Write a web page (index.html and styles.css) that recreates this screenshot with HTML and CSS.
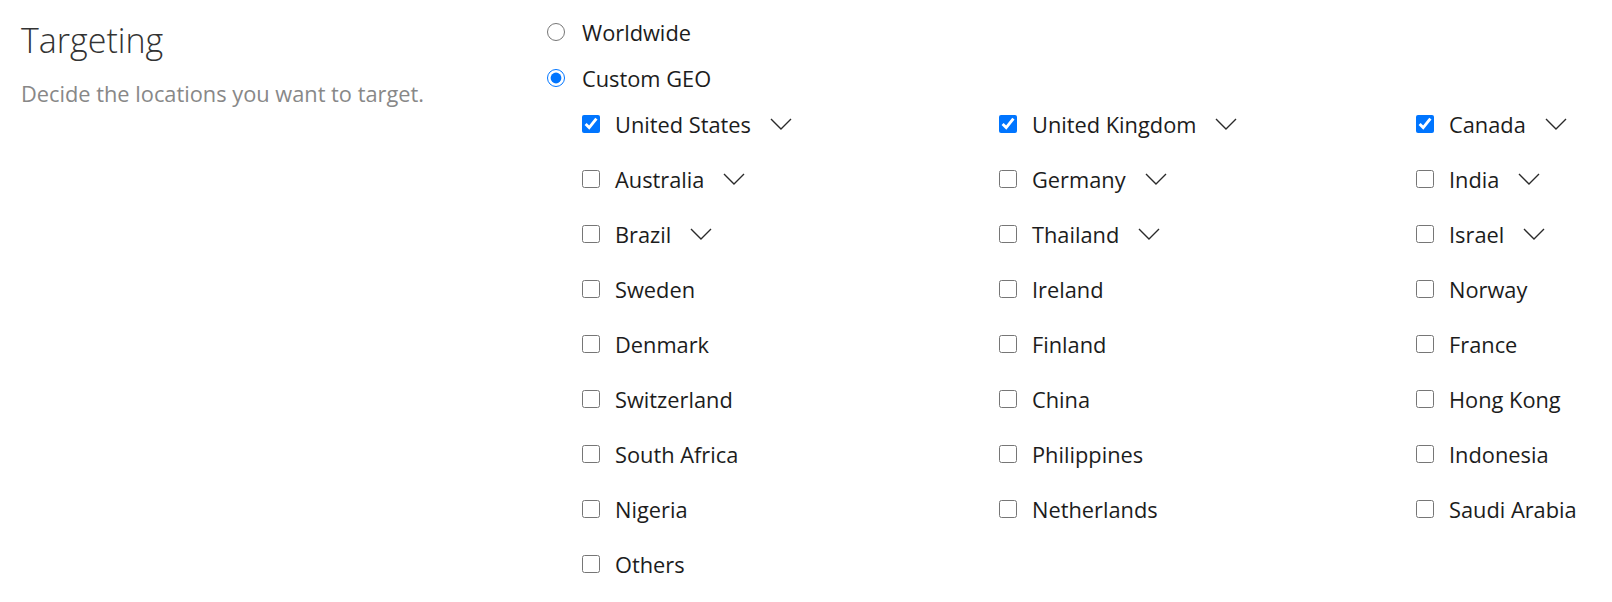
FILE: index.html
```html
<!DOCTYPE html>
<html lang="en">
<head>
<meta charset="utf-8">
<title>Targeting</title>
<link rel="stylesheet" href="styles.css">
</head>
<body>
<div class="page">
  <div class="intro">
    <h2 class="title">Targeting</h2>
    <p class="subtitle">Decide the locations you want to target.</p>
  </div>
  <div class="options">
    <label class="radio-row"><input type="radio" name="geo" class="radio"><span>Worldwide</span></label>
    <label class="radio-row"><input type="radio" name="geo" class="radio" checked><span>Custom GEO</span></label>
    <div class="geo-grid">
      <label class="geo"><input type="checkbox" class="check" checked><span>United States</span><svg class="chev" viewBox="0 0 22 12"><polyline points="1,1 11,11 21,1"/></svg></label>
      <label class="geo"><input type="checkbox" class="check" checked><span>United Kingdom</span><svg class="chev" viewBox="0 0 22 12"><polyline points="1,1 11,11 21,1"/></svg></label>
      <label class="geo"><input type="checkbox" class="check" checked><span>Canada</span><svg class="chev" viewBox="0 0 22 12"><polyline points="1,1 11,11 21,1"/></svg></label>

      <label class="geo"><input type="checkbox" class="check"><span>Australia</span><svg class="chev" viewBox="0 0 22 12"><polyline points="1,1 11,11 21,1"/></svg></label>
      <label class="geo"><input type="checkbox" class="check"><span>Germany</span><svg class="chev" viewBox="0 0 22 12"><polyline points="1,1 11,11 21,1"/></svg></label>
      <label class="geo"><input type="checkbox" class="check"><span>India</span><svg class="chev" viewBox="0 0 22 12"><polyline points="1,1 11,11 21,1"/></svg></label>

      <label class="geo"><input type="checkbox" class="check"><span>Brazil</span><svg class="chev" viewBox="0 0 22 12"><polyline points="1,1 11,11 21,1"/></svg></label>
      <label class="geo"><input type="checkbox" class="check"><span>Thailand</span><svg class="chev" viewBox="0 0 22 12"><polyline points="1,1 11,11 21,1"/></svg></label>
      <label class="geo"><input type="checkbox" class="check"><span>Israel</span><svg class="chev" viewBox="0 0 22 12"><polyline points="1,1 11,11 21,1"/></svg></label>

      <label class="geo"><input type="checkbox" class="check"><span>Sweden</span></label>
      <label class="geo"><input type="checkbox" class="check"><span>Ireland</span></label>
      <label class="geo"><input type="checkbox" class="check"><span>Norway</span></label>

      <label class="geo"><input type="checkbox" class="check"><span>Denmark</span></label>
      <label class="geo"><input type="checkbox" class="check"><span>Finland</span></label>
      <label class="geo"><input type="checkbox" class="check"><span>France</span></label>

      <label class="geo"><input type="checkbox" class="check"><span>Switzerland</span></label>
      <label class="geo"><input type="checkbox" class="check"><span>China</span></label>
      <label class="geo"><input type="checkbox" class="check"><span>Hong Kong</span></label>

      <label class="geo"><input type="checkbox" class="check"><span>South Africa</span></label>
      <label class="geo"><input type="checkbox" class="check"><span>Philippines</span></label>
      <label class="geo"><input type="checkbox" class="check"><span>Indonesia</span></label>

      <label class="geo"><input type="checkbox" class="check"><span>Nigeria</span></label>
      <label class="geo"><input type="checkbox" class="check"><span>Netherlands</span></label>
      <label class="geo"><input type="checkbox" class="check"><span>Saudi Arabia</span></label>

      <label class="geo"><input type="checkbox" class="check"><span>Others</span></label>
    </div>
  </div>
</div>
</body>
</html>
```

FILE: styles.css
```css
html, body {
  margin: 0;
  padding: 0;
  background: #ffffff;
}

body {
  font-family: "Open Sans", "Noto Sans", sans-serif;
  color: #1c1c1c;
}

.page {
  display: flex;
  padding-left: 21px;
}

.intro {
  width: 526px;
  flex: none;
  padding-top: 20px;
}

.title {
  margin: 0;
  font-size: 34px;
  line-height: 40px;
  font-weight: 300;
  color: #333333;
}

.subtitle {
  margin: 20px 0 0;
  font-size: 21.8px;
  line-height: 28px;
  color: #888888;
}

.options {
  flex: 1;
  padding-top: 9px;
}

.radio-row {
  display: flex;
  align-items: center;
  height: 46px;
  gap: 17px;
  font-size: 21.8px;
}

.radio {
  width: 18px;
  height: 18px;
  margin: 0;
  flex: none;
}

.geo-grid {
  display: grid;
  grid-template-columns: 417px 417px 1fr;
  grid-auto-rows: 46px;
  row-gap: 9px;
  padding-left: 35px;
}

.geo {
  display: flex;
  align-items: center;
  font-size: 21.8px;
}

.check {
  width: 18px;
  height: 18px;
  margin: 0 15px 0 0;
  flex: none;
}

.chev {
  width: 22px;
  height: 12px;
  margin-left: 19px;
  flex: none;
}

.chev polyline {
  fill: none;
  stroke: #2a2a2a;
  stroke-width: 1.4;
}
```
